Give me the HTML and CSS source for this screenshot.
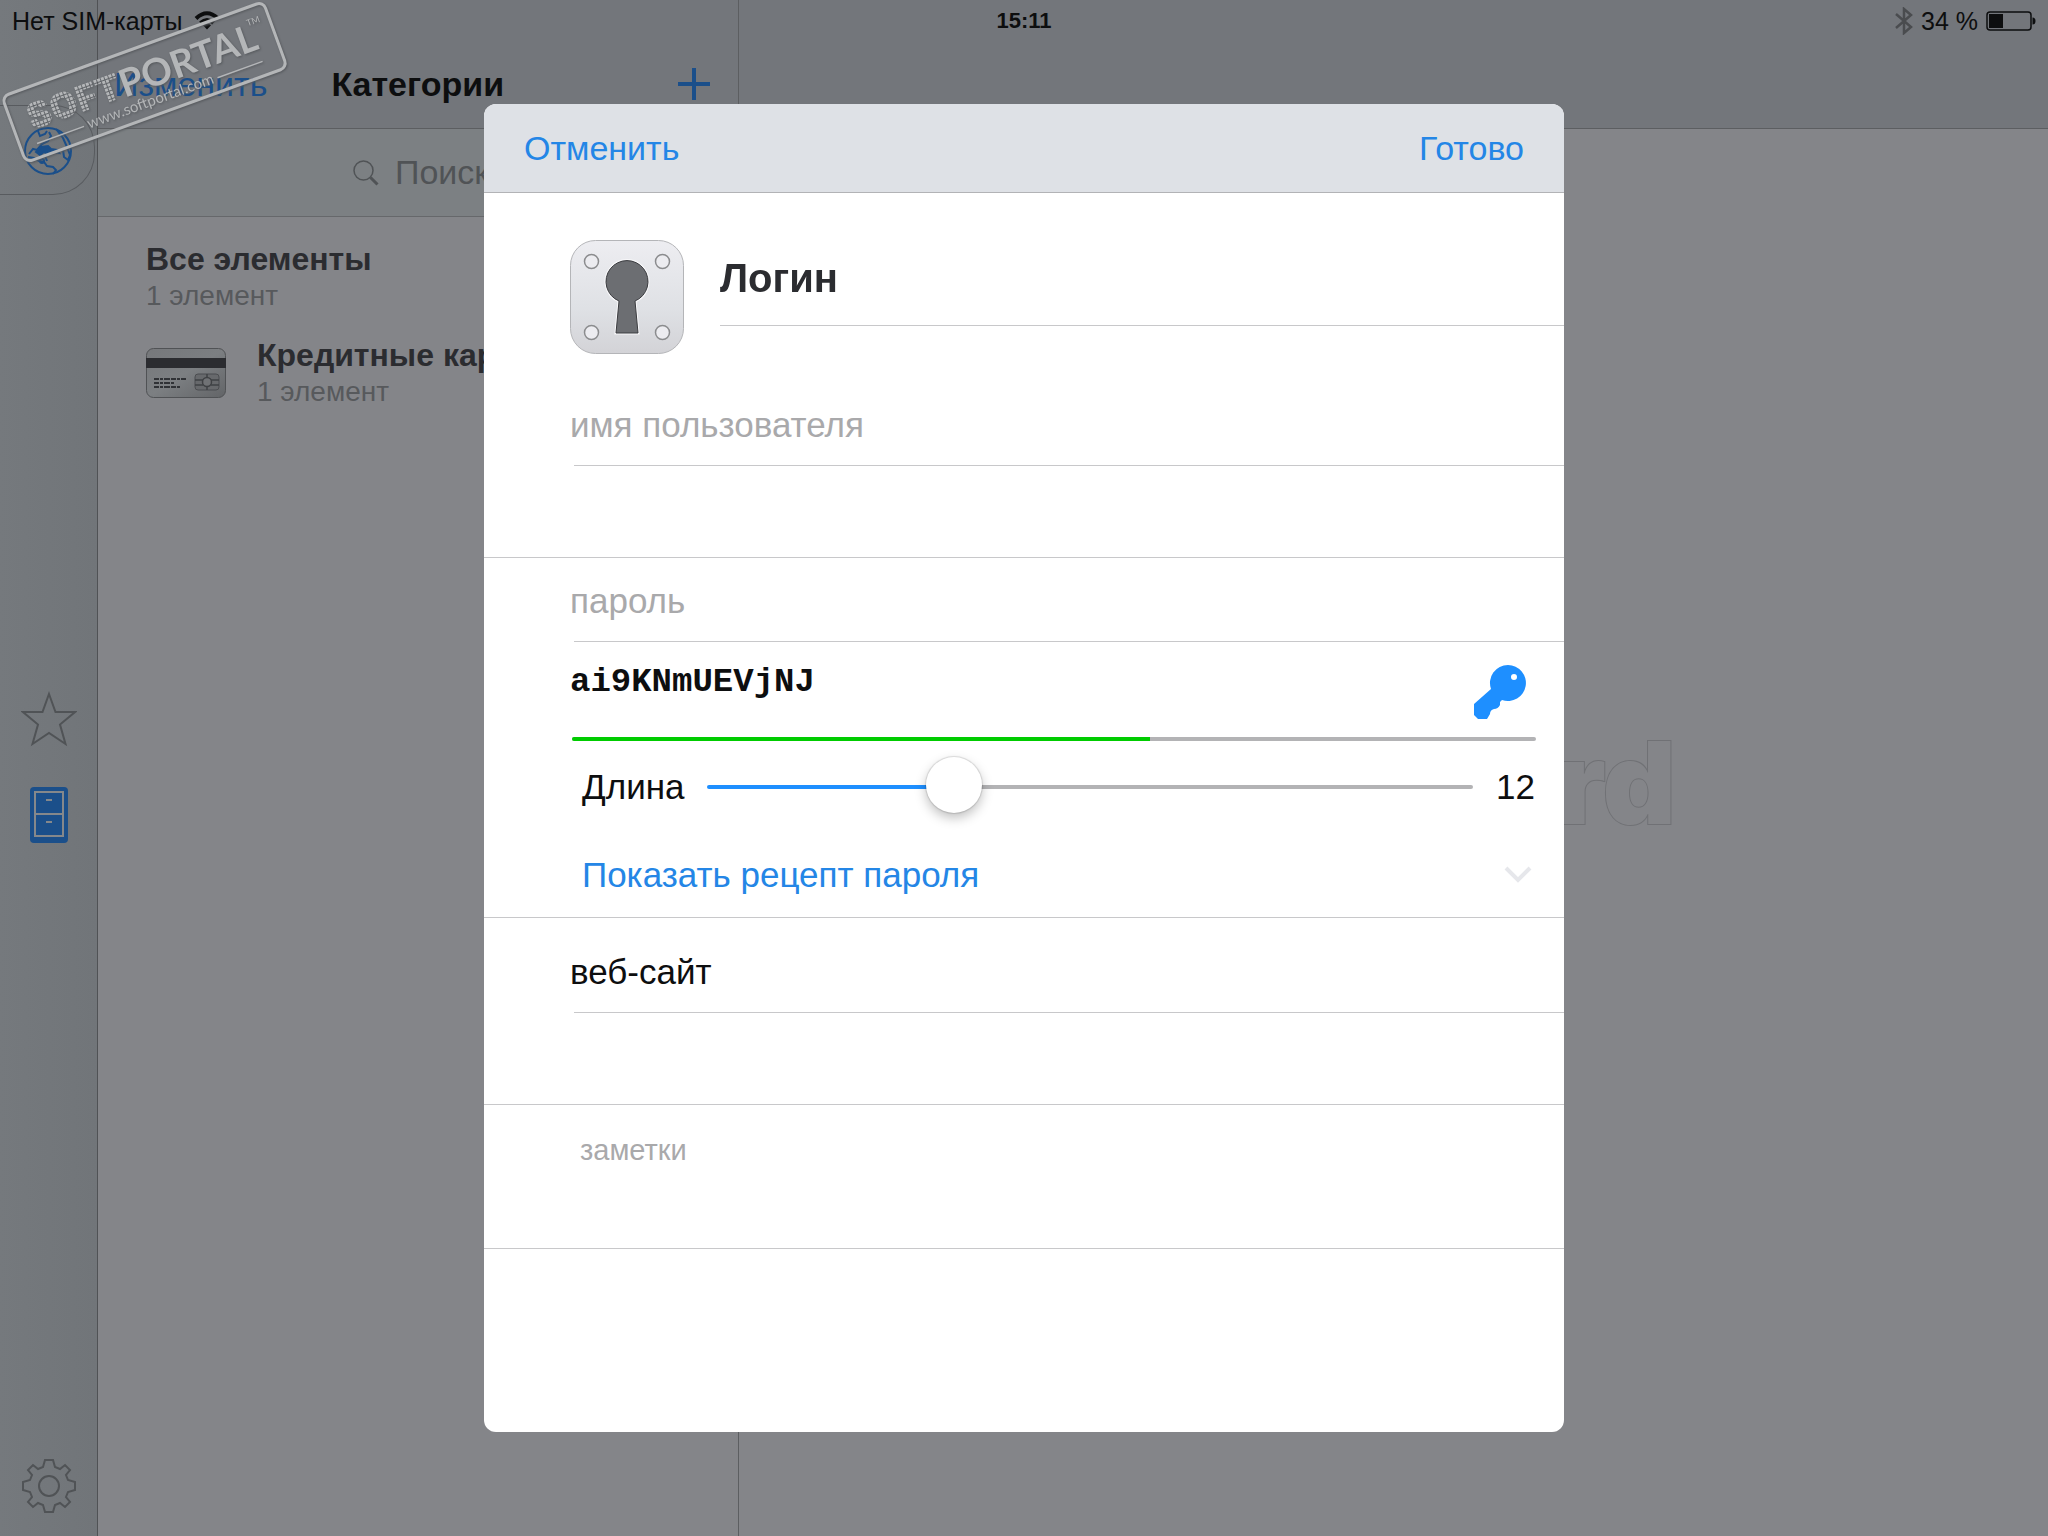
FILE: index.html
```html
<!DOCTYPE html>
<html lang="ru">
<head>
  <meta charset="UTF-8">
  <meta name="viewport" content="width=device-width, initial-scale=1.0">
  <title>Категории</title>
  <link rel="stylesheet" href="styles.css">
</head>
<body>
  <div class="status-bar">
    <div class="status-left">
      <span>Нет SIM-карты</span>
      <svg width="26" height="20" viewBox="0 0 26 20" fill="none" stroke="#0d0e0f" stroke-width="4">
        <path d="M2 7.500Q13-3 24 7.500M6.500 12Q13 6 19.500 12"/>
        <path d="M13 12.500a6 6 0 0 1 4 1.800L13 18.500l-4-4.200a6 6 0 0 1 4-1.800z" fill="#0d0e0f" stroke="none"/>
      </svg>
    </div>
    <time class="status-time">15:11</time>
    <div class="status-right">
      <svg width="18" height="28" viewBox="0 0 18 28" fill="none" stroke="#4a4c4f" stroke-width="2.500">
        <path d="M1 7l15 13-7 6V2l7 6L1 21"/>
      </svg>
      <span>34 %</span>
      <svg width="50" height="20" viewBox="0 0 50 20">
        <rect x="1" y="1" width="44" height="18" rx="3" fill="none" stroke="#0d0e0f" stroke-width="1.500"/>
        <rect x="3" y="3" width="14" height="14" fill="#0d0e0f"/>
        <path d="M46.500 6.500q3 0 3 3.500t-3 3.500z" fill="#0d0e0f"/>
      </svg>
    </div>
  </div>

  <div class="app">
    <nav class="sidebar">
      <a href="#" class="vault-tab" aria-label="Хранилище">
        <svg width="50" height="50" viewBox="0 0 50 50" fill="none" stroke="#1b4f8a" stroke-width="2">
          <circle cx="25" cy="25" r="23"/>
          <path d="M15 5l2 5 5-2 2-3M26 6l2 4-3 5-6 3-5 6-4-1-4 5M5 31l6 1 5 3 5 1 3 4 6 1 3 3-3 4M22 30l2 5M33 3l7 9 4 9 3 8-2 5-4-3-1-7"/>
          <path d="M13 26l5-5 7-1 3 3 6 1 2 3-7-1-3 3-5-3-4 3z" fill="#1b4f8a"/>
          <circle cx="19" cy="35" r="2"/>
        </svg>
      </a>
      <div class="sidebar-middle">
        <a href="#" aria-label="Избранное">
          <svg width="56" height="56" viewBox="0 0 56 56" fill="none" stroke="#505356" stroke-width="2">
            <path d="M28 3l6.500 18H54L39 33.500 44.500 53 28 42 11.500 53 17 33.500 2 21h19.500z"/>
          </svg>
        </a>
        <a href="#" aria-label="Категории">
          <svg width="38" height="56" viewBox="0 0 38 56" fill="none" stroke="#85888b" stroke-width="2">
            <rect width="38" height="56" rx="4" fill="#1b4f8a" stroke="none"/>
            <path d="M5 5h28v44H5zM5 27h28M16 13h6M16 35h6"/>
          </svg>
        </a>
      </div>
      <a href="#" class="settings" aria-label="Настройки">
        <svg width="54" height="54" viewBox="0 0 54 54" fill="none" stroke="#505356" stroke-width="2">
          <path d="M23 1H31L33 8 38 10 43 6 48 11 44 16 46 21 53 23V31L46 33 44 38 48 43 43 48 38 44 33 46 31 53H23L21 46 16 44 11 48 6 43 10 38 8 33 1 31V23L8 21 10 16 6 11 11 6 16 10 21 8z"/>
          <circle cx="27" cy="27" r="10"/>
        </svg>
      </a>
    </nav>

    <section class="categories">
      <header class="categories-header">
        <button type="button" class="edit">Изменить</button>
        <h1>Категории</h1>
        <button type="button" class="add" aria-label="Добавить">
          <svg width="32" height="32" viewBox="0 0 32 32" stroke="#1b4f8a" stroke-width="4"><path d="M16 0v32M0 16h32"/></svg>
        </button>
      </header>
      <div class="search">
        <svg width="26" height="26" viewBox="0 0 26 26" fill="none" stroke="#505356">
          <circle cx="10.500" cy="10.500" r="9.500" stroke-width="1.500"/>
          <path d="M17.500 17.500l7 7" stroke-width="3"/>
        </svg>
        <input type="text" placeholder="Поиск" aria-label="Поиск">
      </div>
      <ul class="category-list">
        <li>
          <div>
            <h2>Все элементы</h2>
            <p>1 элемент</p>
          </div>
        </li>
        <li>
          <svg width="80" height="50" viewBox="0 0 80 50">
            <defs>
              <linearGradient id="card" x1="0" y1="0" x2="1" y2="1">
                <stop offset="0" stop-color="#76787b"/>
                <stop offset=".5" stop-color="#7c7f82"/>
                <stop offset="1" stop-color="#626467"/>
              </linearGradient>
            </defs>
            <rect x=".5" y=".5" width="79" height="49" rx="7" fill="url(#card)" stroke="#505255"/>
            <path d="M0 10h80v10H0z" fill="#2b2c30"/>
            <path d="M8 31h32M8 35h20M8 39h26" stroke="#303236" stroke-width="2" stroke-dasharray="5 1 3 1 6 1"/>
            <rect x="49" y="26" width="24" height="16" rx="3" fill="#67696c" stroke="#4b4d50"/>
            <path d="M49 32h8M49 37h8M65 32h8M65 37h8M61 26v4M61 38v4" stroke="#3f4144" stroke-width="1.500"/>
            <circle cx="61" cy="34" r="4.500" fill="#707275" stroke="#3f4144" stroke-width="1.500"/>
          </svg>
          <div>
            <h2>Кредитные карты</h2>
            <p>1 элемент</p>
          </div>
        </li>
      </ul>
    </section>

    <main class="detail">
      <header class="detail-header"></header>
      <div class="detail-empty">rd</div>
    </main>
  </div>

  <div class="overlay">
    <form class="dialog" role="dialog" aria-label="Логин">
      <header class="dialog-header">
        <button type="button">Отменить</button>
        <button type="submit">Готово</button>
      </header>

      <div class="title-row">
        <svg width="114" height="114" viewBox="0 0 114 114">
          <defs>
            <linearGradient id="plate" x1="0" y1="0" x2="0" y2="1">
              <stop offset="0" stop-color="#ededf1"/>
              <stop offset=".6" stop-color="#dfe1e5"/>
              <stop offset="1" stop-color="#d3d3d7"/>
            </linearGradient>
          </defs>
          <rect x=".5" y=".5" width="113" height="113" rx="25" fill="url(#plate)" stroke="#b4b5b8"/>
          <path d="M49 61a21 21 0 1 1 16 0l3 32H46z" fill="#6c6e72" stroke="#f7f7f9" stroke-width="3"/>
          <path d="M49 61a21 21 0 1 1 16 0l3 32H46z" fill="#6c6e72" stroke="#3b3c40"/>
          <g fill="#ececf0" stroke="#8b8c8e" stroke-width="1.500">
            <circle cx="21.500" cy="21.500" r="7"/>
            <circle cx="92.500" cy="21.500" r="7"/>
            <circle cx="21.500" cy="92.500" r="7"/>
            <circle cx="92.500" cy="92.500" r="7"/>
          </g>
        </svg>
        <input type="text" class="title-input" value="Логин" aria-label="Название">
      </div>

      <div class="section">
        <label for="username" class="field-label muted">имя пользователя</label>
        <input type="text" id="username" class="field-input">
      </div>

      <div class="section">
        <label for="password" class="field-label muted">пароль</label>
        <div class="password-row">
          <input type="text" id="password" value="ai9KNmUEVjNJ" spellcheck="false">
          <button type="button" aria-label="Создать пароль">
            <svg width="52" height="54" viewBox="0 0 52 54" fill="#1e8fff">
              <path fill-rule="evenodd" d="M34 0a18 18 0 1 1-6 35l-2 2v3q-2 4-6 4-4 1-4 5l-3 5H4l-4-4V39l17-15A18 18 0 0 1 34 0zm6 9a3 3 0 1 0 0 6 3 3 0 0 0 0-6z"/>
            </svg>
          </button>
        </div>
        <div class="strength"><div class="strength-fill" style="width: 60%"></div></div>
        <div class="length-row">
          <label for="length">Длина</label>
          <input type="range" id="length" min="4" max="30" value="12">
          <output for="length">12</output>
        </div>
        <button type="button" class="recipe">
          <span>Показать рецепт пароля</span>
          <svg width="28" height="18" viewBox="0 0 28 18" fill="none" stroke="#e6e7eb" stroke-width="4"><path d="M2 2l12 12L26 2"/></svg>
        </button>
      </div>

      <div class="section">
        <label for="website" class="field-label website">веб-сайт</label>
        <input type="url" id="website" class="field-input">
      </div>

      <div class="section">
        <textarea class="notes" placeholder="заметки" aria-label="заметки"></textarea>
      </div>
    </form>
  </div>

  <svg class="stamp" width="290" height="170" viewBox="0 0 290 170" fill="#b4b6b8">
    <defs>
      <pattern id="dots" width="4" height="4" patternUnits="userSpaceOnUse">
        <rect width="3" height="3" fill="#b4b6b8"/>
      </pattern>
    </defs>
    <g transform="translate(1 97) rotate(-20)">
      <rect x="1" y="0" width="278" height="70" rx="7" fill="none" stroke="#b4b6b8" stroke-width="3"/>
      <text class="stamp-soft" x="18" y="42">SOFT</text>
      <text class="stamp-portal" x="116" y="43">PORTAL</text>
      <text class="stamp-tm" x="256" y="18">TM</text>
      <text class="stamp-url" x="72" y="60">www.softportal.com</text>
      <path d="M18 56h50M210 56h48" stroke="#b4b6b8" stroke-width="1.500"/>
    </g>
  </svg>
</body>
</html>
```
FILE: styles.css
```css
* {
  margin: 0;
  padding: 0;
  box-sizing: border-box;
}

body {
  font-family: "Liberation Sans", Arial, sans-serif;
  font-size: 34px;
  color: #0d0e0f;
  background: #848589;
  overflow: hidden;
}

button, input, textarea {
  font: inherit;
  color: inherit;
  border: none;
  outline: none;
  background: none;
}

button {
  cursor: pointer;
}

a, svg {
  display: block;
}

/* status bar */
.status-bar {
  position: absolute;
  top: 0;
  left: 0;
  right: 0;
  z-index: 1;
  display: grid;
  grid-template-columns: 1fr auto 1fr;
  height: 42px;
  padding: 0 12px;
  align-items: center;
  font-size: 25px;
}

.status-left, .status-right {
  display: flex;
  align-items: center;
  gap: 12px;
}

.status-right {
  justify-content: flex-end;
  gap: 8px;
}

.status-time {
  font-size: 22px;
  font-weight: bold;
}

/* page */
.app {
  display: grid;
  grid-template-columns: 98px 641px 1fr;
  height: 100vh;
}

.sidebar {
  display: flex;
  flex-direction: column;
  justify-content: space-between;
  padding-top: 105px;
  padding-bottom: 22px;
  background: linear-gradient(90deg, #75797d, #717579);
  border-right: 1px solid #505255;
}

.vault-tab {
  width: 95px;
  height: 90px;
  padding: 20px 23px;
  border: 1px solid #585b5f;
  border-left: none;
  border-radius: 0 42px 42px 0;
}

.sidebar-middle {
  display: flex;
  flex-direction: column;
  align-items: center;
  gap: 40px;
  padding-bottom: 120px;
}

.settings {
  align-self: center;
  padding-bottom: 1px;
}

.categories {
  border-right: 1px solid #5c5e61;
}

.categories-header, .detail-header {
  height: 129px;
  background: #73767b;
  border-bottom: 1px solid #5c5e61;
}

.categories-header {
  display: flex;
  align-items: center;
  padding: 40px 28px 0 16px;
}

.categories-header h1 {
  flex: 1;
  margin-left: 64px;
  font-size: 34px;
}

.edit {
  color: #1b4f8a;
}

.search {
  display: flex;
  justify-content: center;
  align-items: center;
  gap: 16px;
  height: 88px;
  padding-left: 12px;
  background: #7c8083;
  border-bottom: 1px solid #66686b;
}

.search input {
  width: 100px;
}

.search input::placeholder {
  color: #505356;
}

.category-list {
  padding-top: 11px;
  list-style: none;
}

.category-list li {
  display: flex;
  align-items: center;
  gap: 31px;
  padding: 12px 0 10px 48px;
}

.category-list h2 {
  font-size: 32px;
  line-height: 38px;
  color: #2b2c30;
}

.category-list p {
  font-size: 28px;
  line-height: 36px;
  color: #57595c;
}

.detail {
  display: flex;
  flex-direction: column;
}

.detail-empty {
  flex: 1;
  display: flex;
  align-items: center;
  justify-content: flex-end;
  padding-right: 372px;
  padding-bottom: 100px;
  font-family: Inter, "Liberation Sans", sans-serif;
  font-size: 114px;
  font-weight: 900;
  color: #848589;
  -webkit-text-stroke: 2px #707175;
  paint-order: stroke fill;
}

/* new login dialog */
.overlay {
  position: fixed;
  inset: 0;
  z-index: 2;
  display: flex;
  align-items: center;
  justify-content: center;
}

.dialog {
  width: 100%;
  max-width: 1080px;
  padding-bottom: 183px;
  background: #fff;
  border-radius: 12px;
  overflow: hidden;
}

.dialog-header {
  display: flex;
  justify-content: space-between;
  align-items: center;
  height: 89px;
  padding: 0 40px;
  background: #dee1e6;
  border-bottom: 1px solid #b2b3b6;
  color: #2486e6;
}

.title-row {
  display: flex;
  align-items: flex-start;
  gap: 36px;
  padding: 47px 0 28px 86px;
}

.title-input {
  flex: 1;
  height: 86px;
  padding-bottom: 8px;
  font-size: 40px;
  font-weight: bold;
  color: #2b2c30;
  border-bottom: 1px solid #c8c8ca;
}

.section {
  padding-left: 86px;
  border-bottom: 1px solid #c8c8ca;
  font-size: 35px;
}

.field-label {
  display: block;
  margin-left: 4px;
  padding-top: 2px;
  line-height: 81px;
  text-indent: -4px;
  border-bottom: 1px solid #c8c8ca;
}

.muted {
  color: #a9a9ab;
}

.website {
  padding-top: 13px;
}

.field-input {
  display: block;
  width: 100%;
  height: 91px;
}

.password-row {
  display: flex;
  align-items: center;
  justify-content: space-between;
  height: 95px;
  padding-right: 38px;
}

.password-row input {
  flex: 1;
  padding-bottom: 16px;
  font-family: "Liberation Mono", "Courier New", monospace;
  font-size: 34px;
  font-weight: bold;
}

.password-row button {
  padding-top: 4px;
}

.strength {
  height: 4px;
  margin: 0 28px 0 2px;
  background: #b3b3b5;
  border-radius: 2px;
}

.strength-fill {
  height: 4px;
  background: #00cc00;
  border-radius: 2px 0 0 2px;
}

.length-row {
  display: flex;
  align-items: center;
  gap: 23px;
  height: 92px;
  padding: 0 29px 0 12px;
}

.length-row input {
  flex: 1;
  height: 56px;
  appearance: none;
}

.length-row input::-webkit-slider-runnable-track {
  height: 4px;
  border-radius: 2px;
  background: linear-gradient(90deg, #1e8fff 32%, #b3b3b5 32%);
}

.length-row input::-webkit-slider-thumb {
  appearance: none;
  width: 56px;
  height: 56px;
  margin-top: -28px;
  background: #fff;
  border-radius: 50%;
  box-shadow: 0 0 1px 1px rgba(0, 0, 0, 0.12), 0 5px 12px rgba(0, 0, 0, 0.25);
}

.recipe {
  display: flex;
  justify-content: space-between;
  align-items: center;
  width: 100%;
  height: 84px;
  padding: 0 32px 0 12px;
  color: #2486e6;
}

.notes {
  display: block;
  width: 100%;
  height: 143px;
  padding: 29px 10px;
  font-size: 29px;
  resize: none;
}

.notes::placeholder {
  color: #a9a9ab;
}

/* stamp in the corner */
.stamp {
  position: absolute;
  top: 0;
  left: 0;
  z-index: 3;
  pointer-events: none;
  filter: drop-shadow(1px 1px 1px #55585c);
  font-family: Lato, sans-serif;
}

.stamp-soft {
  font-family: Inter, sans-serif;
  font-size: 36px;
  font-weight: 900;
  fill: url(#dots);
}

.stamp-portal {
  font-size: 38px;
  font-weight: bold;
}

.stamp-tm {
  font-size: 9px;
}

.stamp-url {
  font-size: 15px;
}
```
